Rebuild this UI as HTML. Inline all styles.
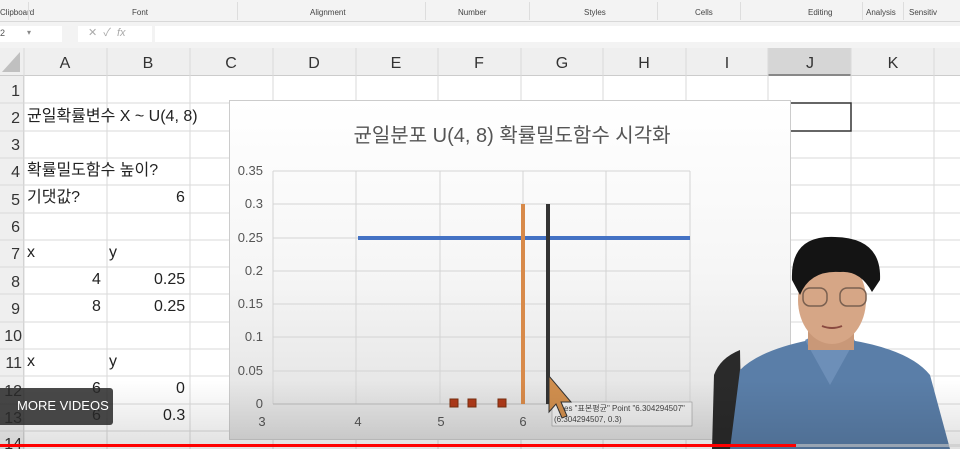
<!DOCTYPE html>
<html><head><meta charset="utf-8"><style>
*{margin:0;padding:0;box-sizing:border-box}
body{width:960px;height:449px;overflow:hidden;background:#fff;font-family:"Liberation Sans","Noto Sans CJK KR",sans-serif;position:relative}
.a{position:absolute}
.t{position:absolute;font-size:16px;line-height:18px;color:#222;white-space:nowrap}
</style></head><body>
<div class="a" style="left:0;top:0;width:960px;height:22px;background:#f3f3f3;border-bottom:1px solid #d8d8d8"></div>
<div class="t" style="left:0;top:8px;font-size:8px;line-height:9px;color:#444">Clipboard</div>
<div class="t" style="left:132px;top:8px;font-size:8px;line-height:9px;color:#444">Font</div>
<div class="t" style="left:310px;top:8px;font-size:8px;line-height:9px;color:#444">Alignment</div>
<div class="t" style="left:458px;top:8px;font-size:8px;line-height:9px;color:#444">Number</div>
<div class="t" style="left:584px;top:8px;font-size:8px;line-height:9px;color:#444">Styles</div>
<div class="t" style="left:695px;top:8px;font-size:8px;line-height:9px;color:#444">Cells</div>
<div class="t" style="left:808px;top:8px;font-size:8px;line-height:9px;color:#444">Editing</div>
<div class="t" style="left:866px;top:8px;font-size:8px;line-height:9px;color:#444">Analysis</div>
<div class="t" style="left:909px;top:8px;font-size:8px;line-height:9px;color:#444">Sensitiv</div>
<div class="a" style="left:28px;top:2px;width:1px;height:18px;background:#ddd"></div>
<div class="a" style="left:237px;top:2px;width:1px;height:18px;background:#ddd"></div>
<div class="a" style="left:425px;top:2px;width:1px;height:18px;background:#ddd"></div>
<div class="a" style="left:529px;top:2px;width:1px;height:18px;background:#ddd"></div>
<div class="a" style="left:657px;top:2px;width:1px;height:18px;background:#ddd"></div>
<div class="a" style="left:740px;top:2px;width:1px;height:18px;background:#ddd"></div>
<div class="a" style="left:862px;top:2px;width:1px;height:18px;background:#ddd"></div>
<div class="a" style="left:903px;top:2px;width:1px;height:18px;background:#ddd"></div>
<div class="a" style="left:0;top:22px;width:960px;height:26px;background:#f3f3f3"></div>
<div class="a" style="left:0;top:26px;width:62px;height:16px;background:#fff"></div>
<div class="t" style="left:0;top:28px;font-size:9px;line-height:10px;color:#555">2</div>
<div class="t" style="left:27px;top:28px;font-size:8px;line-height:9px;color:#888">▾</div>
<div class="a" style="left:78px;top:26px;width:74px;height:16px;background:#fff"></div>
<div class="t" style="left:88px;top:27px;font-size:11px;line-height:13px;color:#aaa">✕ &nbsp;✓ &nbsp;<i>fx</i></div>
<div class="a" style="left:155px;top:26px;width:805px;height:16px;background:#fff"></div>
<div class="a" style="left:0;top:48px;width:960px;height:28px;background:#efefef;border-bottom:1px solid #ccc"></div>
<div class="a" style="left:768px;top:48px;width:83px;height:28px;background:#d6d6d6;border-bottom:2px solid #888"></div>
<svg class="a" style="left:0;top:48px" width="24" height="28"><polygon points="20,4 20,24 2,24" fill="#c0c0c0"/></svg>
<div class="a" style="left:0;top:76px;width:24px;height:373px;background:#efefef;border-right:1px solid #ccc"></div>
<svg class="a" style="left:0;top:0" width="960" height="449">
<g stroke="#dadada" stroke-width="1">
<line x1="24" y1="48" x2="24" y2="449"/><line x1="107" y1="48" x2="107" y2="449"/><line x1="190" y1="48" x2="190" y2="449"/><line x1="273" y1="48" x2="273" y2="449"/><line x1="356" y1="48" x2="356" y2="449"/><line x1="438" y1="48" x2="438" y2="449"/><line x1="521" y1="48" x2="521" y2="449"/><line x1="603" y1="48" x2="603" y2="449"/><line x1="686" y1="48" x2="686" y2="449"/><line x1="768" y1="48" x2="768" y2="449"/><line x1="851" y1="48" x2="851" y2="449"/><line x1="934" y1="48" x2="934" y2="449"/>
<line x1="0" y1="103" x2="960" y2="103"/><line x1="0" y1="131" x2="960" y2="131"/><line x1="0" y1="158" x2="960" y2="158"/><line x1="0" y1="185" x2="960" y2="185"/><line x1="0" y1="213" x2="960" y2="213"/><line x1="0" y1="240" x2="960" y2="240"/><line x1="0" y1="267" x2="960" y2="267"/><line x1="0" y1="294" x2="960" y2="294"/><line x1="0" y1="322" x2="960" y2="322"/><line x1="0" y1="349" x2="960" y2="349"/><line x1="0" y1="376" x2="960" y2="376"/><line x1="0" y1="404" x2="960" y2="404"/><line x1="0" y1="431" x2="960" y2="431"/>
</g>
<rect x="790" y="103" width="61" height="28" fill="none" stroke="#333" stroke-width="1.5"/>
<g font-family="Liberation Sans" font-size="16" fill="#333" text-anchor="middle">
<text x="65" y="68">A</text><text x="148" y="68">B</text><text x="231" y="68">C</text><text x="314" y="68">D</text><text x="396" y="68">E</text><text x="479" y="68">F</text><text x="562" y="68">G</text><text x="644" y="68">H</text><text x="727" y="68">I</text><text x="810" y="68">J</text><text x="893" y="68">K</text>
</g>
<g font-family="Liberation Sans" font-size="16" fill="#333" text-anchor="end">
<text x="20" y="96">1</text><text x="20" y="123">2</text><text x="20" y="150">3</text><text x="20" y="177">4</text><text x="20" y="205">5</text><text x="20" y="232">6</text><text x="20" y="259">7</text><text x="20" y="287">8</text><text x="20" y="314">9</text><text x="22" y="341">10</text><text x="22" y="368">11</text><text x="22" y="396">12</text><text x="22" y="423">13</text><text x="22" y="449">14</text>
</g>
</svg>
<div class="t" style="left:27px;top:108px">균일확률변수 X ~ U(4, 8)</div>
<div class="t" style="left:27px;top:162px">확률밀도함수 높이?</div>
<div class="t" style="left:27px;top:189px">기댓값?</div>
<div class="t" style="left:176px;top:189px">6</div>
<div class="t" style="left:27px;top:244px">x</div><div class="t" style="left:109px;top:244px">y</div>
<div class="t" style="left:92px;top:271px">4</div><div class="t" style="left:154px;top:271px">0.25</div>
<div class="t" style="left:92px;top:298px">8</div><div class="t" style="left:154px;top:298px">0.25</div>
<div class="t" style="left:27px;top:353px">x</div><div class="t" style="left:109px;top:353px">y</div>
<div class="t" style="left:92px;top:380px">6</div><div class="t" style="left:176px;top:380px">0</div>
<div class="t" style="left:92px;top:407px">6</div><div class="t" style="left:163px;top:407px">0.3</div>
<svg class="a" style="left:229px;top:100px" width="562" height="340">
<defs><linearGradient id="g" x1="0" y1="0" x2="0" y2="1"><stop offset="0" stop-color="#fff"/><stop offset="0.5" stop-color="#f6f6f6"/><stop offset="1" stop-color="#e0e0e0"/></linearGradient></defs>
<rect x="0.5" y="0.5" width="561" height="339" fill="url(#g)" stroke="#ccc"/>
<text x="283" y="42" font-size="20" fill="#555" text-anchor="middle" font-family="Liberation Sans,Noto Sans CJK KR,sans-serif">균일분포 U(4, 8) 확률밀도함수 시각화</text>
<g stroke="#d4d4d4"><line x1="44" y1="71" x2="461" y2="71"/><line x1="44" y1="104" x2="461" y2="104"/><line x1="44" y1="138" x2="461" y2="138"/><line x1="44" y1="171" x2="461" y2="171"/><line x1="44" y1="204" x2="461" y2="204"/><line x1="44" y1="237" x2="461" y2="237"/><line x1="44" y1="271" x2="461" y2="271"/>
<line x1="44" y1="71" x2="44" y2="304"/><line x1="127" y1="71" x2="127" y2="304"/><line x1="211" y1="71" x2="211" y2="304"/><line x1="294" y1="71" x2="294" y2="304"/><line x1="377" y1="71" x2="377" y2="304"/><line x1="461" y1="71" x2="461" y2="304"/></g>
<line x1="44" y1="304" x2="461" y2="304" stroke="#bbb"/>
<g font-size="13" fill="#555" text-anchor="end" font-family="Liberation Sans"><text x="34" y="75">0.35</text><text x="34" y="108">0.3</text><text x="34" y="142">0.25</text><text x="34" y="175">0.2</text><text x="34" y="208">0.15</text><text x="34" y="241">0.1</text><text x="34" y="275">0.05</text><text x="34" y="308">0</text></g>
<g font-size="13" fill="#555" text-anchor="middle" font-family="Liberation Sans"><text x="33" y="326">3</text><text x="129" y="326">4</text><text x="212" y="326">5</text><text x="294" y="326">6</text></g>
<line x1="129" y1="138" x2="461" y2="138" stroke="#4472c4" stroke-width="4"/>
<line x1="294" y1="104" x2="294" y2="304" stroke="#d88a4a" stroke-width="4"/>
<line x1="319" y1="104" x2="319" y2="304" stroke="#333" stroke-width="4"/>
<g fill="#b03a1a" stroke="#7a3010"><rect x="221" y="299" width="8" height="8"/><rect x="239" y="299" width="8" height="8"/><rect x="269" y="299" width="8" height="8"/></g>
<rect x="323" y="302" width="140" height="24" fill="#f0f0f0" stroke="#888" stroke-width="0.5"/>
<text x="335" y="311" font-size="8" fill="#444" font-family="Liberation Sans,Noto Sans CJK KR">es "표본평균" Point "6.304294507"</text>
<text x="325" y="322" font-size="8" fill="#444" font-family="Liberation Sans">(6.304294507, 0.3)</text>
<polygon points="320,276 320,312 327,304 333,318 338,316 332,302 342,302" fill="#d18f4e" stroke="#333" stroke-width="1"/>
</svg>
<svg class="a" style="left:700px;top:200px" width="260" height="249">
<path d="M14,175 Q20,158 40,150 L42,249 L12,249 Z" fill="#2a2a2a"/>
<path d="M30,249 L40,170 Q60,150 110,140 L130,160 L150,140 Q210,150 230,175 L250,249 Z" fill="#5a7ea8"/>
<path d="M105,140 L130,185 L155,140 L145,135 L130,150 L115,135 Z" fill="#6d8fb8"/>
<rect x="108" y="112" width="46" height="38" fill="#c99878"/>
<ellipse cx="132" cy="100" rx="34" ry="44" fill="#d6a686"/>
<path d="M92,80 Q90,35 135,37 Q182,38 180,80 L172,92 Q160,70 140,72 Q110,70 100,95 Z" fill="#141414"/>
<g fill="none" stroke="#7a6050" stroke-width="1.5"><rect x="103" y="88" width="24" height="18" rx="7"/><rect x="140" y="88" width="26" height="18" rx="7"/></g>
<path d="M122,126 Q132,130 142,126" stroke="#8a4a40" stroke-width="2" fill="none"/>
</svg>
<div class="a" style="left:0;top:380px;width:960px;height:69px;background:linear-gradient(rgba(0,0,0,0),rgba(0,0,0,0.12))"></div>
<div class="a" style="left:0;top:388px;width:113px;height:37px;background:rgba(40,40,40,0.85);border-radius:0 3px 3px 0"></div>
<div class="t" style="left:17px;top:398px;font-size:13px;line-height:16px;color:#fff">MORE VIDEOS</div>
<div class="a" style="left:0;top:444px;width:960px;height:3px;background:rgba(200,200,200,0.6)"></div>
<div class="a" style="left:0;top:444px;width:796px;height:3px;background:#f00"></div>
</body></html>
